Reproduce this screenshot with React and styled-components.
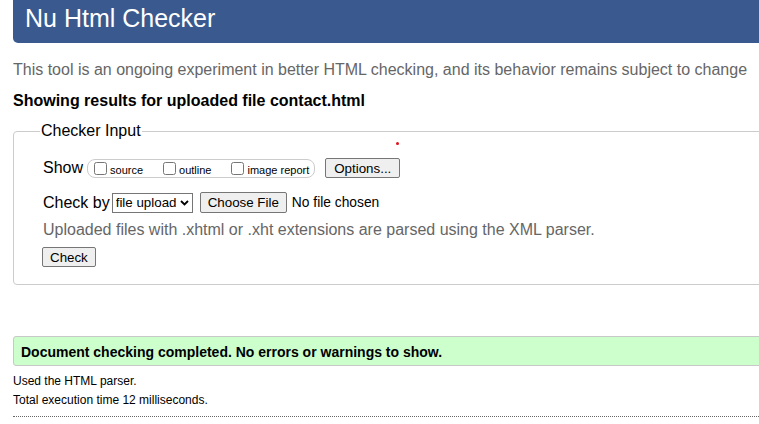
import React from 'react';
import styled, { createGlobalStyle } from 'styled-components';

const GlobalStyle = createGlobalStyle`
  html, body {
    margin: 0;
    padding: 0;
    overflow: hidden;
    background: #fff;
  }
  body {
    font-family: "Liberation Sans", Arial, sans-serif;
    color: #000;
  }
`;

const Page = styled.div`
  width: 900px;
  padding-left: 13px;
`;

const Header = styled.h1`
  margin: 0;
  height: 43px;
  box-sizing: border-box;
  padding: 4px 12px 0;
  background: #3a5a8f;
  color: #fff;
  font-size: 25px;
  font-weight: normal;
  line-height: 29px;
  border-radius: 0 0 0 5px;
`;

const Intro = styled.p`
  margin: 18px 0 0;
  font-size: 16px;
  line-height: 18px;
  color: #666;
`;

const ResultsFor = styled.h2`
  margin: 13px 0 0;
  font-size: 16px;
  line-height: 18px;
  font-weight: bold;
`;

const Fieldset = styled.fieldset`
  position: relative;
  margin: 12px 0 0;
  padding: 18px 29px 17px;
  border: 1px solid #ccc;
  border-radius: 4px;
  min-width: 0;
`;

const Legend = styled.legend`
  padding: 0 1px;
  margin-left: -3px;
  font-size: 16px;
  line-height: 18px;
`;

const Dot = styled.span`
  position: absolute;
  left: 382px;
  top: 2px;
  width: 3px;
  height: 3px;
  border-radius: 50%;
  background: #e0101a;
`;

const Row = styled.div`
  display: flex;
  align-items: center;
  height: ${p => p.$h}px;
  margin-top: ${p => p.$mt || 0}px;
`;

const Label = styled.span`
  font-size: 16px;
  margin-right: ${p => p.$gap}px;
`;

const Group = styled.div`
  display: flex;
  align-items: center;
  gap: 20px;
  height: 19px;
  box-sizing: border-box;
  padding: 0 5px 0 6px;
  border: 1px solid #ccc;
  border-radius: 8px;
  margin-right: 10px;
`;

const Option = styled.label`
  display: flex;
  align-items: center;
  gap: 3px;
  font-size: 11px;
`;

const OptionText = styled.span`
  padding-top: 3px;
`;

const Box = styled.input`
  margin: 0;
  width: 13px;
  height: 13px;
`;

const Button = styled.button`
  height: ${p => p.$h || 20}px;
  box-sizing: border-box;
  padding: 0 ${p => p.$px || 7}px;
  margin: 0;
  font-family: "Liberation Sans", Arial, sans-serif;
  font-size: 13.33px;
  color: #000;
  background: #efefef;
  border: 1px solid #767676;
  border-radius: 2px;
`;

const SelectWrap = styled.span`
  position: relative;
  display: inline-flex;
  margin-right: 7px;
`;

const Select = styled.select`
  appearance: none;
  -webkit-appearance: none;
  width: 81px;
  height: 20px;
  margin: 0;
  padding: 0 12px 0 3px;
  font-family: "Liberation Sans", Arial, sans-serif;
  font-size: 13.33px;
  color: #000;
  background: #fff;
  border: 1px solid #767676;
  border-radius: 0;
`;

const Chevron = styled.svg`
  position: absolute;
  right: 4px;
  top: 7px;
  pointer-events: none;
`;

const FileName = styled.span`
  margin-left: 5px;
  font-size: 13.8px;
`;

const Help = styled.p`
  margin: 8px 0 0;
  font-size: 16px;
  line-height: 18px;
  color: #666;
`;

const CheckRow = styled.div`
  margin-top: 8px;
  margin-left: -1px;
`;

const Success = styled.div`
  margin-top: 51px;
  height: 30px;
  box-sizing: border-box;
  display: flex;
  align-items: center;
  padding: 1px 7px 0;
  background: #ccffcc;
  border: 1px solid #c8c8c8;
  border-radius: 3px 0 0 3px;
  font-size: 14px;
  font-weight: bold;
`;

const Note = styled.p`
  margin: ${p => p.$mt}px 0 0;
  font-size: 12px;
  line-height: 19px;
`;

const Rule = styled.hr`
  margin: 6px 0 0;
  height: 0;
  border: 0;
  border-top: 1px dotted #666;
`;

export default function App() {
  return (
    <>
      <GlobalStyle />
      <Page>
        <Header>Nu Html Checker</Header>
        <Intro>
          This tool is an ongoing experiment in better HTML checking, and its behavior remains subject to change
        </Intro>
        <ResultsFor>Showing results for uploaded file contact.html</ResultsFor>

        <Fieldset>
          <Legend>Checker Input</Legend>
          <Dot />
          <Row $h={20}>
            <Label $gap={4}>Show</Label>
            <Group>
              <Option><Box type="checkbox" /><OptionText>source</OptionText></Option>
              <Option><Box type="checkbox" /><OptionText>outline</OptionText></Option>
              <Option><Box type="checkbox" /><OptionText>image report</OptionText></Option>
            </Group>
            <Button $px={8}>Options...</Button>
          </Row>
          <Row $h={21} $mt={14}>
            <Label $gap={2}>Check by</Label>
            <SelectWrap>
              <Select defaultValue="file">
                <option value="address">address</option>
                <option value="file">file upload</option>
                <option value="text">text input</option>
              </Select>
              <Chevron width="9" height="6" viewBox="0 0 9 6">
                <path d="M1 1 L4.5 4.5 L8 1" fill="none" stroke="#000" strokeWidth="1.8" />
              </Chevron>
            </SelectWrap>
            <Button $h={21}>Choose File</Button>
            <FileName>No file chosen</FileName>
          </Row>
          <Help>Uploaded files with .xhtml or .xht extensions are parsed using the XML parser.</Help>
          <CheckRow>
            <Button>Check</Button>
          </CheckRow>
        </Fieldset>

        <Success>Document checking completed. No errors or warnings to show.</Success>
        <Note $mt={6}>Used the HTML parser.</Note>
        <Note $mt={0}>Total execution time 12 milliseconds.</Note>
        <Rule />
      </Page>
    </>
  );
}
